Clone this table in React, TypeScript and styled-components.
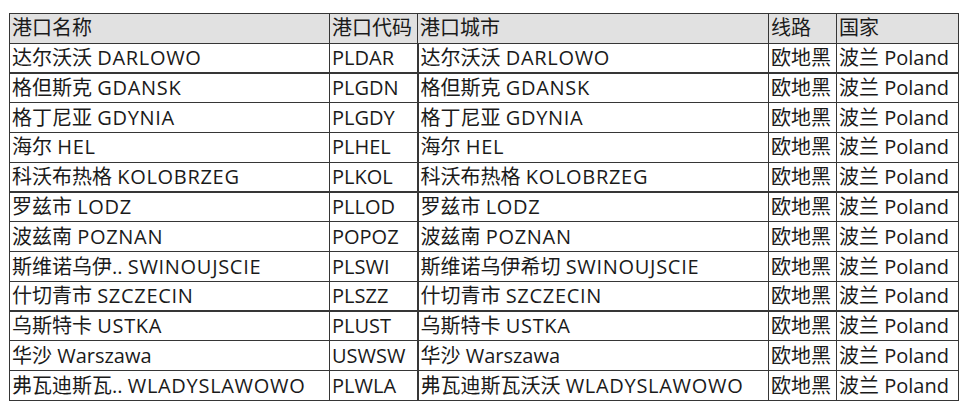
import React from "react";
import styled, { createGlobalStyle } from "styled-components";

const GlobalStyle = createGlobalStyle`
  html, body {
    margin: 0;
    padding: 0;
    background: #ffffff;
  }
  body {
    font-family: "Open Sans", "Noto Sans CJK SC", sans-serif;
    color: #1a1a1a;
  }
`;

const Page = styled.div`
  padding: 13px 0 0 9px;
`;

const Table = styled.table`
  border-collapse: collapse;
  table-layout: fixed;
  width: 949px;
  font-family: "Open Sans", "Noto Sans CJK SC", sans-serif;
  font-size: 20px;
  line-height: 26px;
  color: #1a1a1a;
`;

const Row = styled.tr<{ $heavy?: boolean }>`
  height: 29.77px;

  & > td {
    border-bottom-width: ${(p) => (p.$heavy ? "2px" : "1px")};
  }
`;

const HeadCell = styled.th`
  background: #e1e1e1;
  border: 1px solid #363636;
  font-weight: 400;
  text-align: left;
  padding: 0 2px;
  white-space: nowrap;
  overflow: hidden;
`;

const Cell = styled.td<{ $split?: boolean }>`
  border: 1px solid #363636;
  border-right-width: ${(p) => (p.$split ? "2px" : "1px")};
  padding: 0 2px;
  white-space: nowrap;
  overflow: hidden;
`;

// upper-case latin names run a touch wider in the original font
const Latin = styled.span<{ $caps?: boolean }>`
  letter-spacing: ${(p) => (p.$caps ? "0.7px" : "0")};
`;

type Port = {
  name: string;
  code: string;
  city: string;
  latin: string;
  heavy?: boolean;
};

const ports: Port[] = [
  { name: "达尔沃沃", code: "PLDAR", city: "达尔沃沃", latin: "DARLOWO", heavy: true },
  { name: "格但斯克", code: "PLGDN", city: "格但斯克", latin: "GDANSK" },
  { name: "格丁尼亚", code: "PLGDY", city: "格丁尼亚", latin: "GDYNIA" },
  { name: "海尔", code: "PLHEL", city: "海尔", latin: "HEL" },
  { name: "科沃布热格", code: "PLKOL", city: "科沃布热格", latin: "KOLOBRZEG", heavy: true },
  { name: "罗兹市", code: "PLLOD", city: "罗兹市", latin: "LODZ" },
  { name: "波兹南", code: "POPOZ", city: "波兹南", latin: "POZNAN" },
  { name: "斯维诺乌伊..", code: "PLSWI", city: "斯维诺乌伊希切", latin: "SWINOUJSCIE" },
  { name: "什切青市", code: "PLSZZ", city: "什切青市", latin: "SZCZECIN", heavy: true },
  { name: "乌斯特卡", code: "PLUST", city: "乌斯特卡", latin: "USTKA" },
  { name: "华沙", code: "USWSW", city: "华沙", latin: "Warszawa" },
  { name: "弗瓦迪斯瓦..", code: "PLWLA", city: "弗瓦迪斯瓦沃沃", latin: "WLADYSLAWOWO" },
];

function Name({ cjk, latin }: { cjk: string; latin: string }) {
  const caps = latin === latin.toUpperCase();
  return (
    <>
      {cjk} <Latin $caps={caps}>{latin}</Latin>
    </>
  );
}

export default function App() {
  return (
    <>
      <GlobalStyle />
      <Page>
        <Table>
          <colgroup>
            <col style={{ width: 320 }} />
            <col style={{ width: 88 }} />
            <col style={{ width: 351 }} />
            <col style={{ width: 68 }} />
            <col style={{ width: 122 }} />
          </colgroup>
          <thead>
            <Row>
              <HeadCell>港口名称</HeadCell>
              <HeadCell>港口代码</HeadCell>
              <HeadCell>港口城市</HeadCell>
              <HeadCell>线路</HeadCell>
              <HeadCell>国家</HeadCell>
            </Row>
          </thead>
          <tbody>
            {ports.map((p) => (
              <Row key={p.code} $heavy={p.heavy}>
                <Cell>
                  <Name cjk={p.name} latin={p.latin} />
                </Cell>
                <Cell $split>{p.code}</Cell>
                <Cell>
                  <Name cjk={p.city} latin={p.latin} />
                </Cell>
                <Cell>欧地黑</Cell>
                <Cell>波兰 Poland</Cell>
              </Row>
            ))}
          </tbody>
        </Table>
      </Page>
    </>
  );
}
